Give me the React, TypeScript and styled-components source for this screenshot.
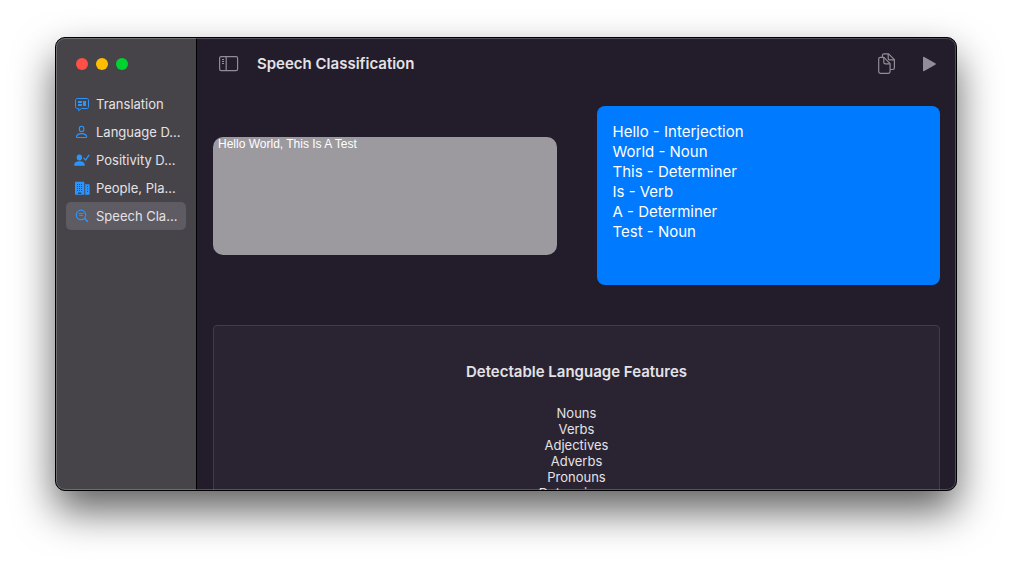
import React from "react";
import styled, { createGlobalStyle } from "styled-components";

const GlobalStyle = createGlobalStyle`
  *, *::before, *::after { box-sizing: border-box; }
  body {
    margin: 0;
    background: #ffffff;
    color: #e4e2e6;
    font-family: Inter, "Liberation Sans", sans-serif;
    font-size: 13px;
    line-height: 16px;
  }
  button { font: inherit; color: inherit; border: 0; padding: 0; background: none; }
  ul { list-style: none; margin: 0; padding: 0; }
`;

const Desktop = styled.div`
  display: flex;
  height: 100vh;
  padding: 37px 55px 73px;
  overflow: hidden;
`;

const AppWindow = styled.div`
  display: flex;
  flex: 1;
  min-width: 0;
  position: relative;
  overflow: hidden;
  border: 1px solid #000000;
  border-radius: 10px;
  background: #231c2b;
  box-shadow: 0 20px 40px rgba(0, 0, 0, 0.62);

  &::after {
    content: "";
    position: absolute;
    inset: 0;
    border: 1px solid rgba(255, 255, 255, 0.22);
    border-radius: 9px;
    pointer-events: none;
  }
`;

const Sidebar = styled.aside`
  flex: none;
  width: 141px;
  padding: 0 10px;
  border-right: 1px solid #000000;
  background: #474449;
`;

const WindowControls = styled.div`
  display: flex;
  align-items: center;
  gap: 8px;
  height: 52px;
  padding-left: 10px;
`;

const Light = styled.button<{ $color: string }>`
  width: 12px;
  height: 12px;
  border-radius: 50%;
  background: ${(p) => p.$color};
`;

const NavItem = styled.button<{ $active?: boolean }>`
  display: flex;
  align-items: center;
  gap: 6px;
  width: 100%;
  height: 28px;
  padding-left: 8px;
  border-radius: 5px;
  text-align: left;
  white-space: nowrap;
  background: ${(p) => (p.$active ? "#5e5b63" : "transparent")};

  svg { flex: none; }
`;

const Main = styled.main`
  display: flex;
  flex-direction: column;
  flex: 1;
  min-width: 0;
`;

const Toolbar = styled.header`
  display: flex;
  flex: none;
  align-items: center;
  height: 52px;
  padding: 0 19px 0 22px;
`;

const Title = styled.h1`
  flex: 1;
  margin: 0 0 0 18px;
  font-size: 15px;
  line-height: 20px;
  font-weight: 600;
`;

const ToolButton = styled.button`
  display: flex;
  color: #918d96;

  & + & { margin-left: 26px; }
`;

const Content = styled.div`
  flex: 1;
  min-height: 0;
  padding: 16px;
  overflow: hidden;
`;

const Panels = styled.section`
  display: grid;
  grid-template-columns: 1fr 1fr;
  align-items: center;
  gap: 40px;
  margin-bottom: 40px;
`;

const Input = styled.textarea`
  display: block;
  width: 100%;
  height: 118px;
  padding: 0 5px;
  border: 0;
  border-radius: 10px;
  outline: 0;
  resize: none;
  background: #9c999f;
  color: #ffffff;
  font-family: "Liberation Sans", Arial, sans-serif;
  font-size: 12px;
  line-height: 14px;
`;

const Results = styled.ul`
  && { padding: 16px; }
  min-height: 179px;
  border-radius: 8px;
  background: #007aff;
  color: #ffffff;
  font-size: 15px;
  line-height: 20px;
`;

const Features = styled.section`
  padding: 36px 16px;
  border: 1px solid #423c4a;
  border-radius: 4px;
  background: #2a2432;
  text-align: center;
`;

const FeaturesTitle = styled.h2`
  margin: 0 0 23px;
  font-size: 15px;
  line-height: 20px;
  font-weight: 600;
`;

const blue = "#2b95ff";

const TranslationIcon = () => (
  <svg width="16" height="16" viewBox="0 0 16 16" fill="none" aria-hidden="true">
    <path
      d="M3.2 2.5h9.6c1.2 0 1.7.6 1.7 1.7v6.6c0 1.1-.5 1.7-1.7 1.7H7.4l-2.7 2.3v-2.3H3.2c-1.1 0-1.7-.6-1.7-1.7V4.2c0-1.1.6-1.7 1.7-1.7Z"
      stroke={blue} strokeWidth="1" strokeLinejoin="round"
    />
    <path d="M4 5h4v2H4zM4 8h4v2H4zM9 5h3v5H9z" fill={blue} />
  </svg>
);

const PersonIcon = () => (
  <svg width="16" height="16" viewBox="0 0 16 16" fill="none" stroke={blue} strokeWidth="1.1" aria-hidden="true">
    <ellipse cx="7.6" cy="5" rx="2.3" ry="2.7" />
    <path d="M3.3 13.5c-.7 0-1-.4-.8-1 .5-1.7 2.5-2.9 5.1-2.9s4.6 1.2 5.1 2.9c.2.6-.1 1-.8 1Z" />
  </svg>
);

const PersonCheckIcon = () => (
  <svg width="16" height="16" viewBox="0 0 16 16" fill="none" aria-hidden="true">
    <ellipse cx="5.4" cy="5.5" rx="2.7" ry="3" fill={blue} />
    <path d="M.1 12.9c0-2.2 2.2-3.7 5.3-3.7s5.4 1.5 5.4 3.7c0 .6-.4.9-1 .9H1.1c-.6 0-1-.3-1-.9Z" fill={blue} />
    <path d="m9.8 6.1 1.7 2L15 3.2" stroke={blue} strokeWidth="1.2" strokeLinecap="round" strokeLinejoin="round" />
  </svg>
);

const BuildingsIcon = () => (
  <svg width="16" height="16" viewBox="0 0 16 16" aria-hidden="true">
    <path d="M2 1.7h7.3c.6 0 1 .4 1 1v12.1H1V2.7c0-.6.4-1 1-1ZM11.2 4.2h3.4c.6 0 1 .4 1 1v8.6c0 .6-.4 1-1 1h-3.4Z" fill={blue} />
    <path
      d="M3 4h1v1H3zM5 4h1v1H5zM7 4h1v1H7zM3 6h1v1H3zM5 6h1v1H5zM7 6h1v1H7zM3 8h1v1H3zM5 8h1v1H5zM7 8h1v1H7zM3 10h1v1H3zM5 10h1v1H5zM7 10h1v1H7zM4 12.4h3.4V14H4zM13 6h1v1h-1zM13 8.5h1v1h-1zM13 11h1v1h-1z"
      fill="#474449"
    />
  </svg>
);

const SearchTextIcon = () => (
  <svg width="16" height="16" viewBox="0 0 16 16" fill="none" stroke={blue} strokeLinecap="round" aria-hidden="true">
    <circle cx="7" cy="6.9" r="4.7" strokeWidth="1.2" />
    <path d="m10.6 10.5 3 3" strokeWidth="1.6" />
    <path d="M5 5.5h4M5.5 7.5h3" strokeWidth="0.9" />
  </svg>
);

const SidebarIcon = () => (
  <svg width="20" height="16" viewBox="0 0 20 16" fill="none" stroke="currentColor" aria-hidden="true">
    <rect x="0.6" y="0.6" width="18" height="14" rx="1.6" strokeWidth="1.2" />
    <path d="M7.2 0.6v14" strokeWidth="1.2" />
    <path d="M3 3.5h2M3 5.5h2M3 7.5h2" />
  </svg>
);

const CopyIcon = () => (
  <svg width="18" height="22" viewBox="0 0 18 22" fill="none" stroke="currentColor" strokeWidth="1.2" strokeLinejoin="round" aria-hidden="true">
    <path d="M4.4 4V2.5C4.4 1.4 5 .8 6.1.8h4.5l5.8 5.8v8.2c0 1.1-.6 1.7-1.7 1.7h-2.4" />
    <path d="M10.2.9v4.3c0 1.1.5 1.6 1.6 1.6h4.5" />
    <path d="M.7 6.1C.7 5 1.3 4.4 2.4 4.4h3.5l6.2 6.3v7.9c0 1.1-.6 1.7-1.7 1.7h-8c-1.1 0-1.7-.6-1.7-1.7Z" />
    <path d="M5.8 4.5v4.8c0 1.1.5 1.6 1.6 1.6H12" />
  </svg>
);

const PlayIcon = () => (
  <svg width="15" height="16" viewBox="0 0 15 16" fill="currentColor" aria-hidden="true">
    <path d="M1 1.7c0-.8.6-1.1 1.3-.7l11 6.2c.7.4.7 1.1 0 1.5l-11 6.3c-.7.4-1.3.1-1.3-.7Z" />
  </svg>
);

const navItems = [
  { label: "Translation", icon: <TranslationIcon /> },
  { label: "Language D...", icon: <PersonIcon /> },
  { label: "Positivity D...", icon: <PersonCheckIcon /> },
  { label: "People, Pla...", icon: <BuildingsIcon /> },
  { label: "Speech Cla...", icon: <SearchTextIcon />, active: true },
];

const results = [
  ["Hello", "Interjection"],
  ["World", "Noun"],
  ["This", "Determiner"],
  ["Is", "Verb"],
  ["A", "Determiner"],
  ["Test", "Noun"],
];

const features = ["Nouns", "Verbs", "Adjectives", "Adverbs", "Pronouns", "Determiners"];

export default function App() {
  return (
    <>
      <GlobalStyle />
      <Desktop>
        <AppWindow>
          <Sidebar>
            <WindowControls>
              <Light $color="#ff5048" aria-label="Close" />
              <Light $color="#ffbf00" aria-label="Minimize" />
              <Light $color="#00d32f" aria-label="Zoom" />
            </WindowControls>
            <nav aria-label="Tools">
              {navItems.map((item) => (
                <NavItem key={item.label} $active={item.active} aria-current={item.active ? "page" : undefined}>
                  {item.icon}
                  {item.label}
                </NavItem>
              ))}
            </nav>
          </Sidebar>
          <Main>
            <Toolbar>
              <ToolButton aria-label="Toggle sidebar"><SidebarIcon /></ToolButton>
              <Title>Speech Classification</Title>
              <ToolButton aria-label="Copy"><CopyIcon /></ToolButton>
              <ToolButton aria-label="Run"><PlayIcon /></ToolButton>
            </Toolbar>
            <Content>
              <Panels>
                <Input aria-label="Text to classify" defaultValue="Hello World, This Is A Test" spellCheck={false} />
                <Results>
                  {results.map(([word, kind]) => (
                    <li key={word}>{`${word} - ${kind}`}</li>
                  ))}
                </Results>
              </Panels>
              <Features>
                <FeaturesTitle>Detectable Language Features</FeaturesTitle>
                <ul>
                  {features.map((name) => (
                    <li key={name}>{name}</li>
                  ))}
                </ul>
              </Features>
            </Content>
          </Main>
        </AppWindow>
      </Desktop>
    </>
  );
}
